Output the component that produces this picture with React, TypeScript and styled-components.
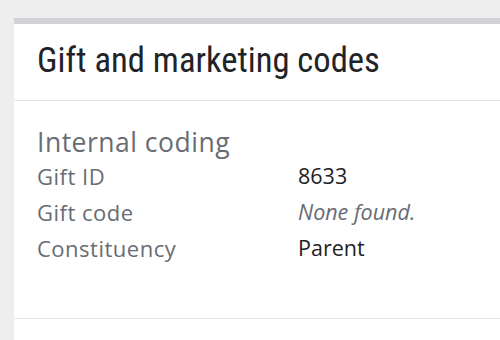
import React from "react";
import styled, { createGlobalStyle } from "styled-components";

const GlobalStyle = createGlobalStyle`
  html, body {
    margin: 0;
    padding: 0;
    background: #eeeeee;
    overflow: hidden;
  }
  body {
    font-family: "Open Sans", "Noto Sans", sans-serif;
  }
`;

const Page = styled.div`
  width: 500px;
  height: 340px;
  padding: 18px 0 0 14px;
  box-sizing: border-box;
  display: flex;
  flex-direction: column;
  overflow: hidden;
`;

const Card = styled.section`
  flex: 1;
  width: 520px;
  background: #ffffff;
  border-top: 6px solid #cfd1d4;
`;

const Header = styled.header`
  padding: 16px 23px 20px;
  border-bottom: 1px solid #e2e3e4;
`;

const Title = styled.h1`
  margin: 0;
  font-family: "Roboto Condensed", "Open Sans", sans-serif;
  font-size: 34.6px;
  line-height: 40px;
  font-weight: 400;
  color: #212327;
`;

const Body = styled.div`
  padding: 26px 23px 52px;
  border-bottom: 1px solid #e2e3e4;
`;

const SectionTitle = styled.h2`
  margin: 0;
  font-size: 26.5px;
  line-height: 31px;
  letter-spacing: 0.5px;
  font-weight: 400;
  color: #686c73;
`;

const Fields = styled.dl`
  margin: 0;
  display: grid;
  grid-template-columns: 261px 1fr;
`;

const Label = styled.dt`
  margin: 0;
  font-size: 22px;
  line-height: 36px;
  letter-spacing: 0.5px;
  color: #686c73;
`;

const Value = styled.dd<{ $empty?: boolean }>`
  margin: 0;
  font-size: 21.5px;
  line-height: 36px;
  color: ${(p) => (p.$empty ? "#686c73" : "#1f2125")};
  font-style: ${(p) => (p.$empty ? "italic" : "normal")};
`;

const rows: { label: string; value: string; empty?: boolean }[] = [
  { label: "Gift ID", value: "8633" },
  { label: "Gift code", value: "None found.", empty: true },
  { label: "Constituency", value: "Parent" },
];

export default function App() {
  return (
    <>
      <GlobalStyle />
      <Page>
        <Card>
          <Header>
            <Title>Gift and marketing codes</Title>
          </Header>
          <Body>
            <SectionTitle>Internal coding</SectionTitle>
            <Fields>
              {rows.map((r) => (
                <React.Fragment key={r.label}>
                  <Label>{r.label}</Label>
                  <Value $empty={r.empty}>{r.value}</Value>
                </React.Fragment>
              ))}
            </Fields>
          </Body>
        </Card>
      </Page>
    </>
  );
}
